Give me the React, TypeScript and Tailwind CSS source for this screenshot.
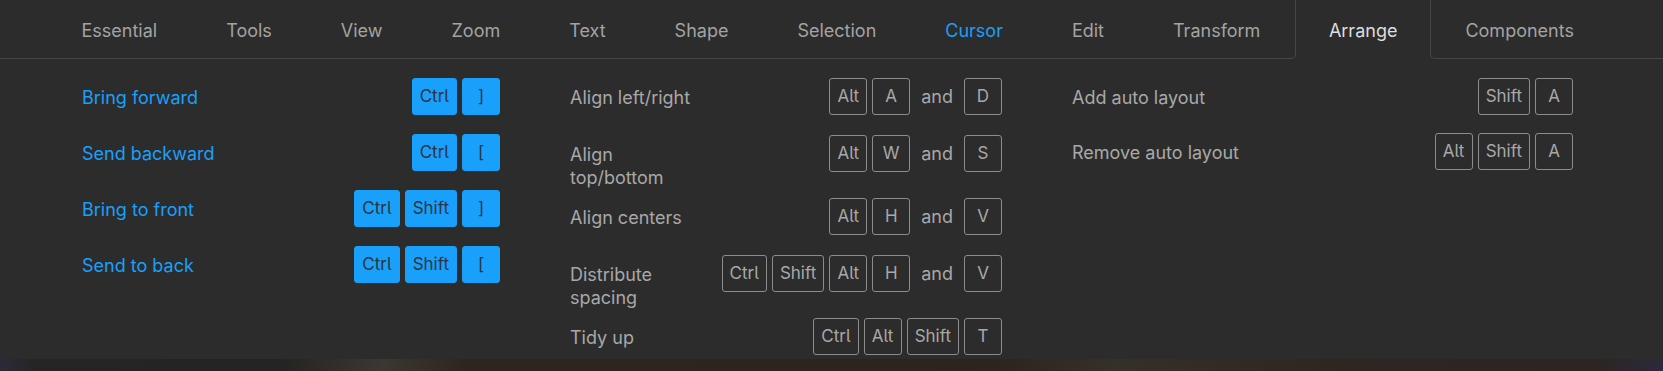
/* ── Keyboard shortcuts panel: Arrange tab ── */

import React from 'react';

type Shortcut = {
  label: string;
  keys: string[];
  alt?: string[];
};

const tabs = ['Essential', 'Tools', 'View', 'Zoom', 'Text', 'Shape', 'Selection', 'Cursor', 'Edit', 'Transform'];

const layerOrder: Shortcut[] = [
  { label: 'Bring forward', keys: ['Ctrl', ']'] },
  { label: 'Send backward', keys: ['Ctrl', '['] },
  { label: 'Bring to front', keys: ['Ctrl', 'Shift', ']'] },
  { label: 'Send to back', keys: ['Ctrl', 'Shift', '['] },
];

const alignment: Shortcut[] = [
  { label: 'Align left/right', keys: ['Alt', 'A'], alt: ['D'] },
  { label: 'Align top/bottom', keys: ['Alt', 'W'], alt: ['S'] },
  { label: 'Align centers', keys: ['Alt', 'H'], alt: ['V'] },
  { label: 'Distribute spacing', keys: ['Ctrl', 'Shift', 'Alt', 'H'], alt: ['V'] },
  { label: 'Tidy up', keys: ['Ctrl', 'Alt', 'Shift', 'T'] },
];

const autoLayout: Shortcut[] = [
  { label: 'Add auto layout', keys: ['Shift', 'A'] },
  { label: 'Remove auto layout', keys: ['Alt', 'Shift', 'A'] },
];

function Key({ k, active = false }: { k: string; active?: boolean }) {
  return (
    <span
      className={`flex h-[37px] min-w-[38px] items-center justify-center rounded-[3px] border px-[7px] text-[17px] [font-feature-settings:'cv05'] ${
        active ? 'border-[#18a0fb] bg-[#18a0fb] text-[#2b3440]' : 'border-[#8c8c8c] text-[#a8a8a8]'
      }`}
    >
      {k}
    </span>
  );
}

function Keys({ s, active = false }: { s: Shortcut; active?: boolean }) {
  return (
    <div className="flex items-center gap-[5px]">
      {s.keys.map((k, i) => (
        <Key key={i} k={k} active={active} />
      ))}
      {s.alt && (
        <>
          <span className="px-[6px] text-[#a8a8a8]">and</span>
          {s.alt.map((k, i) => (
            <Key key={i} k={k} active={active} />
          ))}
        </>
      )}
    </div>
  );
}

export default function App() {
  return (
    <div className="w-[1663px] font-['Inter','Noto_Sans',sans-serif] text-[18px]">
      <div className="h-[359px] overflow-hidden bg-[#2c2c2c]">
        {/* tab bar */}
        <div className="flex h-[59px]">
          <div className="flex rounded-br-[5px] border-r border-b border-[#464646] pl-[47px]">
            {tabs.map((t) => (
              <div
                key={t}
                className={`flex items-center px-[34.5px] pt-[2px] ${t === 'Cursor' ? 'text-[#18a0fb]' : 'text-[#a3a3a3]'}`}
              >
                {t}
              </div>
            ))}
          </div>
          <div className="flex items-center px-[33px] pt-[2px] text-[#dedede]">Arrange</div>
          <div className="flex flex-1 rounded-bl-[5px] border-b border-l border-[#464646]">
            <div className="flex items-center px-[34px] pt-[2px] text-[#a3a3a3]">Components</div>
          </div>
        </div>

        {/* columns */}
        <div className="flex gap-[70px] pt-[19px] pl-[82px]">
          <div className="flex w-[418px] flex-col gap-[19px]">
            {layerOrder.map((s) => (
              <div key={s.label} className="flex items-center justify-between">
                <span className="pt-[2px] text-[#18a0fb]">{s.label}</span>
                <Keys s={s} active />
              </div>
            ))}
          </div>

          <div className="flex w-[432px] flex-col">
            {alignment.map((s) => (
              <div key={s.label} className="flex items-start justify-between">
                <span className="w-[124px] pt-[8px] pb-[9px] leading-[23px] text-[#a8a8a8]">{s.label}</span>
                <div className="mb-[20px]">
                  <Keys s={s} />
                </div>
              </div>
            ))}
          </div>

          <div className="flex w-[501px] flex-col gap-[18px]">
            {autoLayout.map((s) => (
              <div key={s.label} className="flex items-center justify-between">
                <span className="pt-[2px] text-[#a8a8a8]">{s.label}</span>
                <Keys s={s} />
              </div>
            ))}
          </div>
        </div>
      </div>

      {/* blurred wallpaper below the panel */}
      <div className="h-[12px] bg-[linear-gradient(90deg,#2b2a3b_0%,#262523_2%,#252422_17%,#3c3732_23%,#2e251f_28%,#2d241f_60%,#36302a_67%,#2e2621_80%,#2c2521_96%,#2b2a3d_100%)]" />
    </div>
  );
}
